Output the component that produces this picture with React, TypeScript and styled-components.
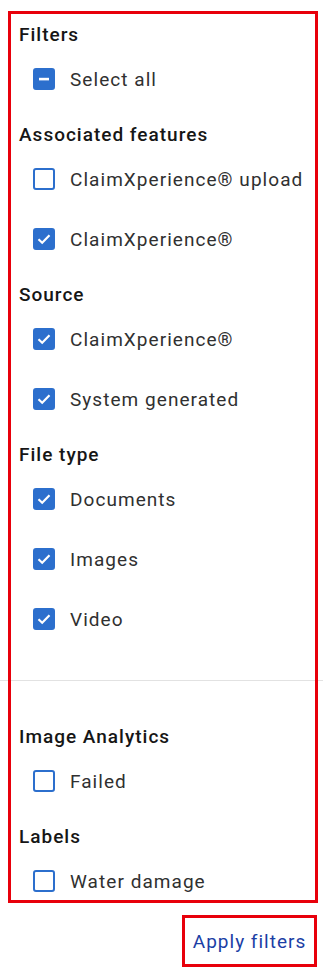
import React from "react";
import styled, { createGlobalStyle } from "styled-components";

const GlobalStyle = createGlobalStyle`
  body {
    margin: 0;
    background: #ffffff;
    font-family: Roboto, "Noto Sans", sans-serif;
  }
`;

interface IFilterOption {
  label: string;
  state: "checked" | "unchecked" | "mixed";
}

interface IFilterGroup {
  title: string;
  options: IFilterOption[];
}

const TOP_GROUPS: IFilterGroup[] = [
  {
    title: "Filters",
    options: [{ label: "Select all", state: "mixed" }],
  },
  {
    title: "Associated features",
    options: [
      { label: "ClaimXperience® upload", state: "unchecked" },
      { label: "ClaimXperience®", state: "checked" },
    ],
  },
  {
    title: "Source",
    options: [
      { label: "ClaimXperience®", state: "checked" },
      { label: "System generated", state: "checked" },
    ],
  },
  {
    title: "File type",
    options: [
      { label: "Documents", state: "checked" },
      { label: "Images", state: "checked" },
      { label: "Video", state: "checked" },
    ],
  },
];

const BOTTOM_GROUPS: IFilterGroup[] = [
  {
    title: "Image Analytics",
    options: [{ label: "Failed", state: "unchecked" }],
  },
  {
    title: "Labels",
    options: [{ label: "Water damage", state: "unchecked" }],
  },
];

const Page = styled.div`
  display: flex;
  flex-direction: column;
  align-items: stretch;
  width: 323px;
`;

const Panel = styled.div`
  margin: 11px 5px 0 8px;
  height: 892px;
  padding: 12px 0 0 11px;
  box-sizing: border-box;
  outline: 3px solid #e8000b;
  outline-offset: -3px;
  display: flex;
  flex-direction: column;
`;

const Group = styled.section<{ $last?: boolean }>`
  display: flex;
  flex-direction: column;
  margin-bottom: ${(p) => (p.$last ? "0" : "24px")};
`;

const Heading = styled.h3`
  margin: 0 0 12px 0;
  height: 24px;
  line-height: 24px;
  font-size: 19px;
  font-weight: 500;
  color: #161616;
  letter-spacing: 1px;
  white-space: nowrap;
`;

const OptionList = styled.ul`
  list-style: none;
  margin: 0;
  padding: 0 0 0 14px;
  display: flex;
  flex-direction: column;
  gap: 20px;
`;

const OptionRow = styled.li`
  display: flex;
  align-items: center;
  gap: 15px;
  height: 40px;
`;

const Box = styled.span<{ $filled: boolean }>`
  width: 22px;
  height: 22px;
  box-sizing: border-box;
  border-radius: 3px;
  border: 2px solid #2c6fcd;
  background: ${(p) => (p.$filled ? "#2c6fcd" : "#ffffff")};
  display: flex;
  align-items: center;
  justify-content: center;
  flex-shrink: 0;
`;

const OptionLabel = styled.span`
  font-size: 19px;
  color: #303030;
  letter-spacing: 1.05px;
  white-space: nowrap;
`;

const Divider = styled.hr`
  border: none;
  border-top: 1px solid #e2e2e2;
  margin: 41px 0 44px -19px;
  width: 323px;
`;

const Footer = styled.div`
  display: flex;
  justify-content: flex-end;
  padding: 12px 6px 0 0;
`;

const ApplyButton = styled.button`
  width: 135px;
  height: 52px;
  box-sizing: border-box;
  border: 3px solid #e8000b;
  background: #ffffff;
  font-family: Roboto, "Noto Sans", sans-serif;
  font-size: 19px;
  letter-spacing: 1px;
  color: #1b3ea5;
  cursor: pointer;
  padding: 0;
`;

const CheckIcon = ({ state }: { state: IFilterOption["state"] }) => {
  if (state === "checked") {
    return (
      <svg width="16" height="16" viewBox="0 0 16 16">
        <path
          d="M2.5 8.2 L6.2 11.7 L13.5 4.3"
          fill="none"
          stroke="#ffffff"
          strokeWidth="2.2"
        />
      </svg>
    );
  }
  if (state === "mixed") {
    return (
      <svg width="16" height="16" viewBox="0 0 16 16">
        <rect x="3" y="6.8" width="10" height="2.6" fill="#ffffff" />
      </svg>
    );
  }
  return null;
};

const FilterGroup = ({ group, last }: { group: IFilterGroup; last?: boolean }) => (
  <Group $last={last}>
    <Heading>{group.title}</Heading>
    <OptionList>
      {group.options.map((option) => (
        <OptionRow key={group.title + option.label}>
          <Box $filled={option.state !== "unchecked"}>
            <CheckIcon state={option.state} />
          </Box>
          <OptionLabel>{option.label}</OptionLabel>
        </OptionRow>
      ))}
    </OptionList>
  </Group>
);

const App = () => {
  return (
    <Page>
      <GlobalStyle />
      <Panel>
        {TOP_GROUPS.map((group, i) => (
          <FilterGroup
            key={group.title}
            group={group}
            last={i === TOP_GROUPS.length - 1}
          />
        ))}
        <Divider />
        {BOTTOM_GROUPS.map((group, i) => (
          <FilterGroup
            key={group.title}
            group={group}
            last={i === BOTTOM_GROUPS.length - 1}
          />
        ))}
      </Panel>
      <Footer>
        <ApplyButton>Apply filters</ApplyButton>
      </Footer>
    </Page>
  );
};

export default App;
